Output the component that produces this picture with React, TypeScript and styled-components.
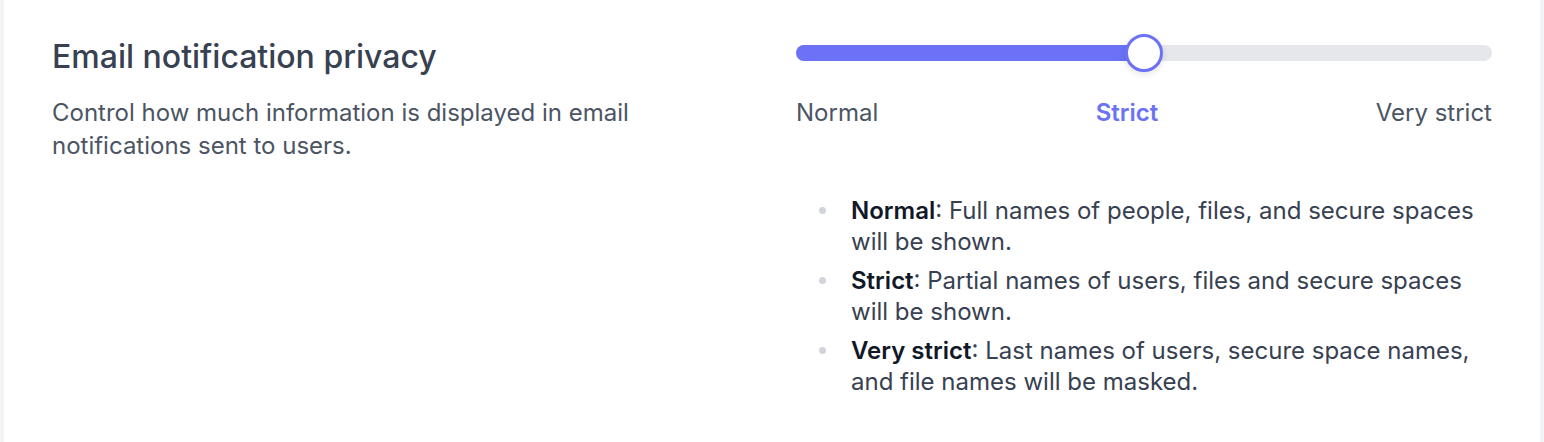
import React from "react";
import styled, { createGlobalStyle } from "styled-components";

const Global = createGlobalStyle`
  html, body { margin: 0; padding: 0; background: #f3f4f6; }
  body { font-family: Inter, "Noto Sans", sans-serif; -webkit-font-smoothing: antialiased; }
`;

const Page = styled.div`
  padding: 0 4px;
  height: 442px;
  box-sizing: border-box;
`;

const Card = styled.section`
  background: #ffffff;
  height: 100%;
  box-sizing: border-box;
  padding: 37px 48px 0 48px;
  display: grid;
  grid-template-columns: 1fr 1fr;
  column-gap: 48px;
  align-items: start;
`;

const Info = styled.div`
  display: flex;
  flex-direction: column;
`;

const Title = styled.h2`
  margin: 0;
  font-size: 32px;
  line-height: 40px;
  font-weight: 500;
  color: #374151;
`;

const Desc = styled.p`
  margin: 19px 0 0 0;
  font-size: 24px;
  line-height: 33px;
  color: #4b5563;
  max-width: 620px;
`;

const Control = styled.div`
  display: flex;
  flex-direction: column;
`;

const SliderRow = styled.div`
  position: relative;
  height: 38px;
  display: flex;
  align-items: center;
  margin-top: -3px;
`;

const Track = styled.div`
  position: relative;
  width: 100%;
  height: 16px;
  border-radius: 8px;
  background: #e5e7eb;
`;

const Fill = styled.div`
  position: absolute;
  left: 0;
  top: 0;
  bottom: 0;
  border-radius: 8px;
  background: #6b72f6;
`;

const Knob = styled.div`
  position: absolute;
  top: 50%;
  width: 38px;
  height: 38px;
  box-sizing: border-box;
  border-radius: 50%;
  background: #ffffff;
  border: 3.5px solid #6b72f6;
  transform: translate(-50%, -50%);
  box-shadow: 0 2px 6px rgba(17, 24, 39, 0.12);
`;

const Labels = styled.div`
  display: flex;
  justify-content: space-between;
  margin-top: 26px;
`;

const Label = styled.span<{ $active?: boolean }>`
  font-size: 24px;
  line-height: 30px;
  color: ${(p) => (p.$active ? "#6b72f6" : "#4b5563")};
  font-weight: ${(p) => (p.$active ? 600 : 400)};
`;

const List = styled.ul`
  margin: 67px 0 0 0;
  padding: 0 0 0 55px;
  list-style: none;
  display: flex;
  flex-direction: column;
  gap: 8px;
`;

const Item = styled.li`
  position: relative;
  font-size: 24px;
  line-height: 31px;
  color: #374151;
  max-width: 641px;
  &::before {
    content: "";
    position: absolute;
    left: -32px;
    top: 12px;
    width: 7px;
    height: 7px;
    border-radius: 50%;
    background: #d1d5db;
  }
  strong {
    color: #111827;
    font-weight: 600;
  }
`;

const levels = ["Normal", "Strict", "Very strict"];
const active = 1;

export default function App() {
  const pct = (active / (levels.length - 1)) * 100;
  return (
    <>
      <Global />
      <Page>
        <Card>
          <Info>
            <Title>Email notification privacy</Title>
            <Desc>
              Control how much information is displayed in email notifications sent to users.
            </Desc>
          </Info>
          <Control>
            <SliderRow>
              <Track>
                <Fill style={{ width: `${pct}%` }} />
                <Knob style={{ left: `${pct}%` }} />
              </Track>
            </SliderRow>
            <Labels>
              {levels.map((l, i) => (
                <Label key={l} $active={i === active}>
                  {l}
                </Label>
              ))}
            </Labels>
            <List>
              <Item>
                <strong>Normal</strong>: Full names of people, files, and secure spaces will be shown.
              </Item>
              <Item>
                <strong>Strict</strong>: Partial names of users, files and secure spaces will be shown.
              </Item>
              <Item>
                <strong>Very strict</strong>: Last names of users, secure space names, and file names will be masked.
              </Item>
            </List>
          </Control>
        </Card>
      </Page>
    </>
  );
}
